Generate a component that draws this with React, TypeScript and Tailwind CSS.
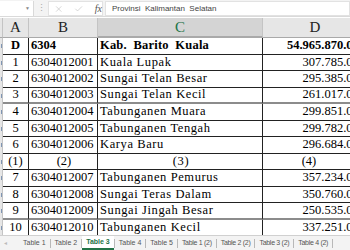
import { X, Check } from 'lucide-react'

type Row = {
  a: string
  b: string
  c: string
  d: string
  bold?: boolean
  label?: boolean
  heavy?: boolean
}

const rows: Row[] = [
  { a: 'D', b: '6304', c: 'Kab.  Barito  Kuala', d: '54.965.870.000', bold: true },
  { a: '1', b: '6304012001', c: 'Kuala Lupak', d: '307.785.000' },
  { a: '2', b: '6304012002', c: 'Sungai Telan Besar', d: '295.385.000' },
  { a: '3', b: '6304012003', c: 'Sungai Telan Kecil', d: '261.017.000', heavy: true },
  { a: '4', b: '6304012004', c: 'Tabunganen Muara', d: '299.851.000' },
  { a: '5', b: '6304012005', c: 'Tabunganen Tengah', d: '299.782.000' },
  { a: '6', b: '6304012006', c: 'Karya Baru', d: '296.684.000' },
  { a: '(1)', b: '(2)', c: '(3)', d: '(4)', label: true },
  { a: '7', b: '6304012007', c: 'Tabunganen Pemurus', d: '357.234.000' },
  { a: '8', b: '6304012008', c: 'Sungai Teras Dalam', d: '350.760.000' },
  { a: '9', b: '6304012009', c: 'Sungai Jingah Besar', d: '250.535.000', heavy: true },
  { a: '10', b: '6304012010', c: 'Tabunganen Kecil', d: '337.251.000' },
]

const tabs = ['Table 1', 'Table 2', 'Table 3', 'Table 4', 'Table 5', 'Table 1 (2)', 'Table 2 (2)', 'Table 3 (2)', 'Table 4 (2)']

function FormulaBar() {
  return (
    <div className="flex h-[17px] bg-[#f3f3f3] border-b border-[#dadada] font-['Liberation_Sans',sans-serif]">
      {/* name box */}
      <div className="w-[34px] h-[15px] mt-[1px] bg-white border-r border-[#d9d9d9] flex items-center justify-end pr-[3px]">
        <span className="text-[5px] text-[#888]">▼</span>
      </div>
      <div className="w-[14px] flex items-center justify-center text-[9px] text-[#aaa] leading-none">⋮</div>
      <div className="w-[55px] h-[15px] mt-[1px] bg-white border border-[#e2e2e2] flex items-center pl-[5px] gap-[11px]">
        <X size={10} strokeWidth={1.3} className="text-[#b0b0b0]" />
        <Check size={10} strokeWidth={1.3} className="text-[#b0b0b0]" />
        <span className="font-['Liberation_Serif',serif] italic text-[10px] text-[#555] leading-none">fx</span>
      </div>
      <div className="flex-1 h-[15px] mt-[1px] ml-[2px] bg-white border border-[#e2e2e2] flex items-center pl-[6px]">
        <span className="text-[8px] text-[#444] whitespace-pre">Provinsi  Kalimantan  Selatan</span>
      </div>
    </div>
  )
}

function HeaderRow() {
  const cell = 'h-full shrink-0 flex items-center justify-center border-r border-[#c4c4c4] border-b border-b-[#a9a9a9]'
  return (
    <div className="flex h-[20px] mt-[1px] font-['Liberation_Serif',serif] text-[15px] text-[#222]">
      <div className={`${cell} w-[3px] bg-[#e6e6e6]`} />
      <div className={`${cell} w-[26px] bg-[#e6e6e6]`}>A</div>
      <div className={`${cell} w-[69px] bg-[#e6e6e6]`}>B</div>
      <div className={`${cell} w-[165px] bg-[#d4d4d4] text-[#217346] border-b-2 border-b-[#217346]`}>C</div>
      <div className={`${cell} w-[105px] bg-[#e6e6e6]`}>D</div>
    </div>
  )
}

function DataRow({ row }: { row: Row }) {
  const line = row.heavy ? 'border-b-2 border-b-[#8c8c8c]' : 'border-b border-b-[#222]'
  const cell = `h-full shrink-0 flex items-center overflow-hidden whitespace-pre border-r border-[#222] ${line}`
  return (
    <div className={`flex h-[16.5px] font-['Liberation_Serif',serif] text-[12.5px] text-black ${row.bold ? 'font-bold' : ''}`}>
      <div className="h-full w-[3px] shrink-0 bg-[#e6e6e6] border-r border-[#c4c4c4] flex items-center justify-end">
        <span className="w-[1px] h-[4px] bg-[#7f95b3]" />
      </div>
      <div className={`${cell} w-[26px] justify-center`}>{row.a}</div>
      <div className={`${cell} w-[69px] pl-[2px] ${row.label ? 'justify-center' : ''}`}>{row.b}</div>
      <div
        className={`${cell} w-[165px] pl-[2px] ${row.label ? 'justify-center' : ''} ${
          row.bold ? 'tracking-[0.2px]' : 'tracking-[0.6px]'
        }`}
      >
        {row.c}
      </div>
      <div className={`${cell} w-[105px] ${row.label ? 'justify-center pr-[12px]' : 'justify-end pr-[2px]'}`}>{row.d}</div>
    </div>
  )
}

function TabBar() {
  return (
    <div className="absolute left-0 bottom-0 w-[350px] h-[15px] bg-[#f3f3f3] border-t border-[#d0d0d0] flex items-stretch font-['Liberation_Sans',sans-serif] text-[7px] text-[#555]">
      <div className="w-[19px] shrink-0 flex items-center pl-[4px] text-[6px] text-[#bbb]">◂</div>
      {tabs.map((t, i) => (
        <div key={t} className="flex items-center shrink-0">
          <div
            className={`h-full flex items-center px-[4px] whitespace-nowrap ${i > 4 ? 'tracking-[-0.3px]' : ''} ${
              i === 2 ? 'bg-white text-[#217346] font-bold border-b-2 border-[#217346]' : ''
            }`}
          >
            {t}
          </div>
          <span className="w-[1px] h-[9px] bg-[#b8b8b8]" />
        </div>
      ))}
    </div>
  )
}

export default function App() {
  return (
    <div className="relative w-[350px] h-[250px] overflow-hidden bg-white">
      <FormulaBar />
      <HeaderRow />
      <div className="flex flex-col">
        {rows.map((r, i) => (
          <DataRow key={i} row={r} />
        ))}
      </div>
      <TabBar />
    </div>
  )
}
